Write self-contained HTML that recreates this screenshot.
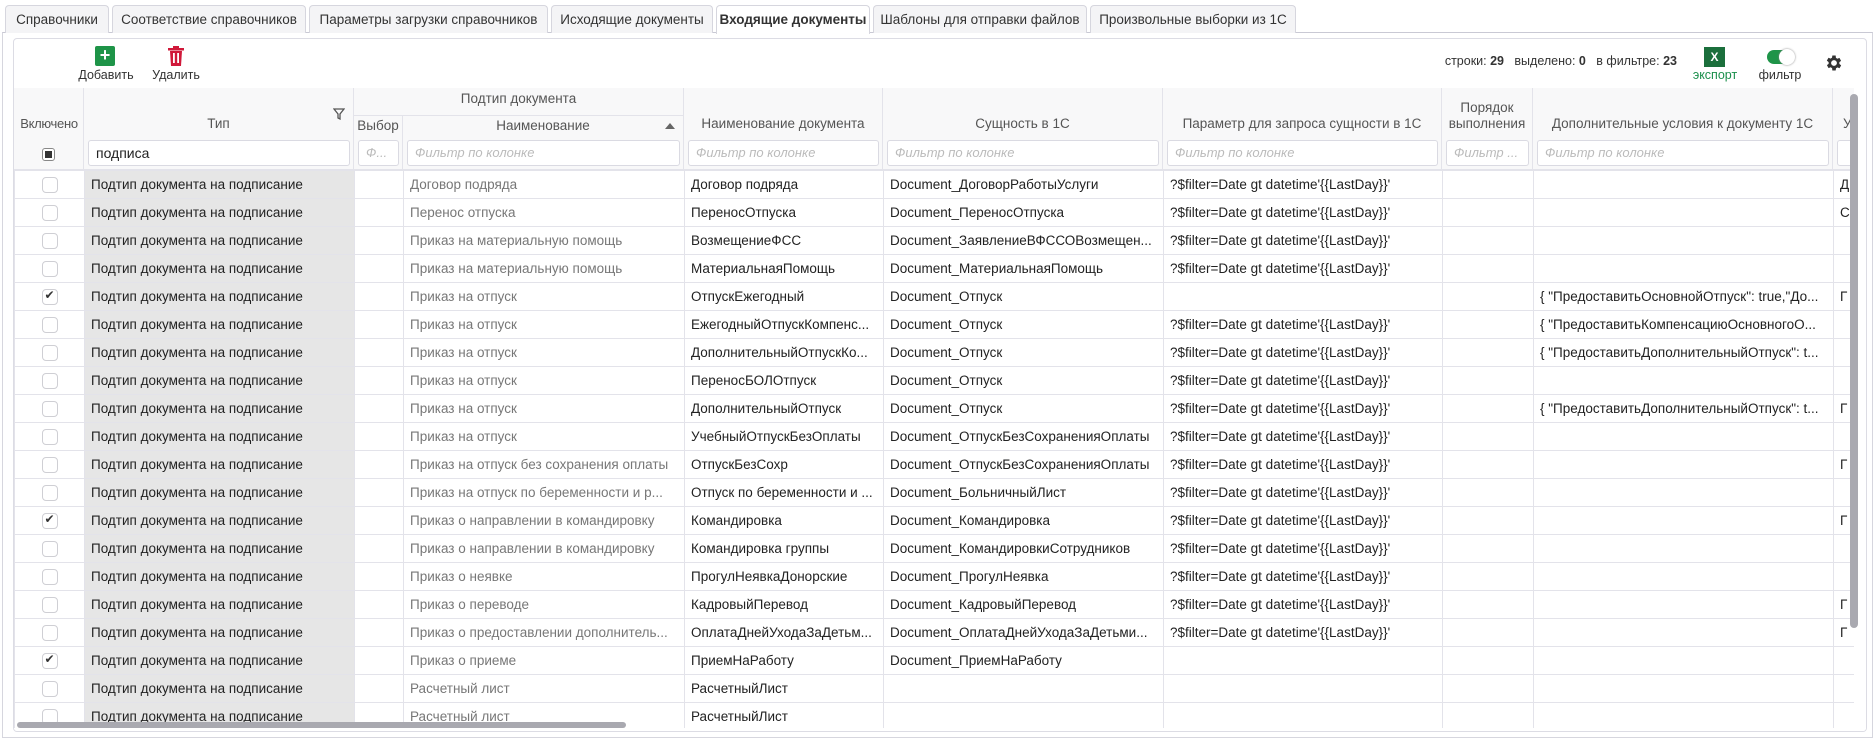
<!DOCTYPE html>
<html><head><meta charset="utf-8">
<style>
*{box-sizing:border-box;margin:0;padding:0}
body{width:1874px;height:740px;overflow:hidden;background:#fff;font-family:"Liberation Sans","DejaVu Sans",sans-serif;font-size:14px;color:#222;position:relative}
.tab{position:absolute;top:5px;height:28px;border:1px solid #d6d6de;border-bottom:none;border-radius:4px 4px 0 0;background:#f4f4f6;font-size:13.5px;color:#333;text-align:center;line-height:27px}
.tab.act{background:#fff;font-weight:bold;height:29px;z-index:2}
.outer{position:absolute;left:2px;top:32px;width:1871px;height:706px;border:1px solid #d6d6de;border-top:1px solid #c9c9d4;background:#fff}
.panel{position:absolute;left:13px;top:38px;width:1854px;height:694px;border:1px solid #dcdce4;border-radius:4px;background:#fff;overflow:hidden}
.lbl{position:absolute;font-size:12.5px;color:#333;text-align:center}
.grid{position:absolute;left:0;top:50px;border-collapse:collapse;table-layout:fixed}
.grid td{height:28px;border:1px solid #e3e3ea;padding:0 6px;white-space:nowrap;overflow:hidden;font-size:13.5px}
.grid td.t{background:#e6e6e6}
.grid td.g{color:#777}
.hd{position:absolute;background:#f8f8f9;border-right:1px solid #e3e3ea;border-bottom:1px solid #e3e3ea;color:#555;font-size:13.5px;text-align:center}
.fi{position:absolute;height:26px;border:1px solid #dadae2;border-radius:3px;background:#fff;font-style:italic;color:#bbb;font-size:13px;line-height:24px;padding-left:7px;white-space:nowrap;overflow:hidden}
.cb{display:inline-block;width:16px;height:16px;border:1px solid #cfcfd4;border-radius:4px;background:#fff;vertical-align:middle;position:relative}
.cb.on::after{content:"✔";position:absolute;left:2px;top:-2px;font-size:12px;color:#333}
</style></head><body>
<div class="outer"></div>
<div class="tab" style="left:5px;width:104px">Справочники</div>
<div class="tab" style="left:112px;width:194px">Соответствие справочников</div>
<div class="tab" style="left:309px;width:239px">Параметры загрузки справочников</div>
<div class="tab" style="left:551px;width:162px">Исходящие документы</div>
<div class="tab act" style="left:716px;width:154px">Входящие документы</div>
<div class="tab" style="left:873px;width:214px">Шаблоны для отправки файлов</div>
<div class="tab" style="left:1090px;width:206px">Произвольные выборки из 1С</div>

<div class="panel">
 <div style="position:absolute;left:81px;top:7px;width:20px;height:20px;background:#1e9448;border-radius:2px;color:#fff;text-align:center;line-height:19px;font-size:18px;font-weight:bold">+</div>
 <div class="lbl" style="left:62px;top:29px;width:60px">Добавить</div>
 <svg style="position:absolute;left:154px;top:7px" width="16" height="20" viewBox="0 0 16 20"><rect x="0" y="2" width="16" height="2.5" fill="#d0193a"/><rect x="5" y="0" width="6" height="3" fill="#d0193a"/><path d="M2 5h12l-1 15H3z" fill="#d0193a"/><rect x="5" y="7" width="1.8" height="10" fill="#fff"/><rect x="9.2" y="7" width="1.8" height="10" fill="#fff"/></svg>
 <div class="lbl" style="left:132px;top:29px;width:60px">Удалить</div>
 <div style="position:absolute;left:1380px;top:15px;width:283px;text-align:right;font-size:12.5px;color:#333">строки: <b>29</b> &nbsp; выделено: <b>0</b> &nbsp; в фильтре: <b>23</b></div>
 <div style="position:absolute;left:1690px;top:8px;width:21px;height:20px;background:#1b6f3c;color:#fff;font-weight:bold;font-size:12px;text-align:center;line-height:20px">X</div>
 <div class="lbl" style="left:1675px;top:29px;width:52px;color:#1b8f4c">экспорт</div>
 <div style="position:absolute;left:1753px;top:11px;width:26px;height:14px;border-radius:7px;background:#1e9448"></div>
 <div style="position:absolute;left:1765px;top:10px;width:16px;height:16px;border-radius:8px;background:#fff;box-shadow:0 0 2px #888"></div>
 <div class="lbl" style="left:1740px;top:29px;width:52px">фильтр</div>
 <svg style="position:absolute;left:1810px;top:14px" width="20" height="20" viewBox="0 0 24 24"><path fill="#333" d="M19.4 13a7.5 7.5 0 0 0 0-2l2.1-1.6-2-3.5-2.5 1a7.3 7.3 0 0 0-1.7-1L15 3h-4l-.4 2.7a7.3 7.3 0 0 0-1.7 1l-2.5-1-2 3.5L6.6 11a7.5 7.5 0 0 0 0 2l-2.1 1.6 2 3.5 2.5-1a7.3 7.3 0 0 0 1.7 1L11 21h4l.4-2.7a7.3 7.3 0 0 0 1.7-1l2.5 1 2-3.5zM13 15.5a3.5 3.5 0 1 1 0-7 3.5 3.5 0 0 1 0 7z" transform="translate(-1 0)"/></svg>

 <div class="hd" style="left:0;top:49px;width:70px;height:82px;overflow:visible"><div style="position:absolute;top:28px;left:0;width:70px;font-size:13px;letter-spacing:-0.3px;white-space:nowrap">Включено</div><div style="position:absolute;top:60px;left:28px;width:13px;height:13px;border:1px solid #888;border-radius:3px;background:#fff"><div style="margin:2px;width:7px;height:7px;background:#333"></div></div></div>
 <div class="hd" style="left:70px;top:49px;width:270px;height:82px"><div style="position:absolute;top:28px;width:100%">Тип</div><svg style="position:absolute;right:8px;top:20px" width="12" height="12" viewBox="0 0 12 12"><path d="M1 1h10L7 6v5L5 10V6z" fill="none" stroke="#555" stroke-width="1.3"/></svg></div>
 <div class="hd" style="left:340px;top:49px;width:330px;height:28px;line-height:22px">Подтип документа</div>
 <div class="hd" style="left:340px;top:77px;width:49px;height:54px"><div style="position:absolute;top:2px;width:100%">Выбор</div></div>
 <div class="hd" style="left:389px;top:77px;width:281px;height:54px"><div style="position:absolute;top:2px;width:100%">Наименование</div><div style="position:absolute;right:8px;top:7px;width:0;height:0;border-left:5px solid transparent;border-right:5px solid transparent;border-bottom:6px solid #666"></div></div>
 <div class="hd" style="left:670px;top:49px;width:199px;height:82px"><div style="position:absolute;top:28px;width:100%">Наименование документа</div></div>
 <div class="hd" style="left:869px;top:49px;width:280px;height:82px"><div style="position:absolute;top:28px;width:100%">Сущность в 1С</div></div>
 <div class="hd" style="left:1149px;top:49px;width:279px;height:82px"><div style="position:absolute;top:28px;width:100%">Параметр для запроса сущности в 1С</div></div>
 <div class="hd" style="left:1428px;top:49px;width:91px;height:82px"><div style="position:absolute;top:12px;width:100%;line-height:16px">Порядок<br>выполнения</div></div>
 <div class="hd" style="left:1519px;top:49px;width:300px;height:82px"><div style="position:absolute;top:28px;width:100%">Дополнительные условия к документу 1С</div></div>
 <div class="hd" style="left:1819px;top:49px;width:40px;height:82px"><div style="position:absolute;top:28px;left:10px">У</div></div>
 <div class="fi" style="left:74px;top:101px;width:262px;color:#222;font-style:normal;font-size:14px">подписа</div>
 <div class="fi" style="left:344px;top:101px;width:41px">Ф...</div>
 <div class="fi" style="left:393px;top:101px;width:273px">Фильтр по колонке</div>
 <div class="fi" style="left:674px;top:101px;width:191px">Фильтр по колонке</div>
 <div class="fi" style="left:873px;top:101px;width:272px">Фильтр по колонке</div>
 <div class="fi" style="left:1153px;top:101px;width:271px">Фильтр по колонке</div>
 <div class="fi" style="left:1432px;top:101px;width:83px">Фильтр ...</div>
 <div class="fi" style="left:1523px;top:101px;width:292px">Фильтр по колонке</div>
 <div class="fi" style="left:1823px;top:101px;width:40px"></div>

 <table class="grid" style="top:131px;width:1862px">
 <colgroup><col style="width:70px"><col style="width:270px"><col style="width:49px"><col style="width:281px"><col style="width:199px"><col style="width:280px"><col style="width:279px"><col style="width:91px"><col style="width:300px"><col style="width:43px"></colgroup>
 <tbody>
 <tr><td align="center"><span class="cb"></span></td><td class="t">Подтип документа на подписание</td><td></td><td class="g">Договор подряда</td><td>Договор подряда</td><td>Document_ДоговорРаботыУслуги</td><td>?$filter=Date gt datetime'{{LastDay}}'</td><td></td><td></td><td>Д</td></tr>
 <tr><td align="center"><span class="cb"></span></td><td class="t">Подтип документа на подписание</td><td></td><td class="g">Перенос отпуска</td><td>ПереносОтпуска</td><td>Document_ПереносОтпуска</td><td>?$filter=Date gt datetime'{{LastDay}}'</td><td></td><td></td><td>С</td></tr>
 <tr><td align="center"><span class="cb"></span></td><td class="t">Подтип документа на подписание</td><td></td><td class="g">Приказ на материальную помощь</td><td>ВозмещениеФСС</td><td>Document_ЗаявлениеВФССОВозмещен...</td><td>?$filter=Date gt datetime'{{LastDay}}'</td><td></td><td></td><td></td></tr>
 <tr><td align="center"><span class="cb"></span></td><td class="t">Подтип документа на подписание</td><td></td><td class="g">Приказ на материальную помощь</td><td>МатериальнаяПомощь</td><td>Document_МатериальнаяПомощь</td><td>?$filter=Date gt datetime'{{LastDay}}'</td><td></td><td></td><td></td></tr>
 <tr><td align="center"><span class="cb on"></span></td><td class="t">Подтип документа на подписание</td><td></td><td class="g">Приказ на отпуск</td><td>ОтпускЕжегодный</td><td>Document_Отпуск</td><td></td><td></td><td>{ "ПредоставитьОсновнойОтпуск": true,"До...</td><td>Г</td></tr>
 <tr><td align="center"><span class="cb"></span></td><td class="t">Подтип документа на подписание</td><td></td><td class="g">Приказ на отпуск</td><td>ЕжегодныйОтпускКомпенс...</td><td>Document_Отпуск</td><td>?$filter=Date gt datetime'{{LastDay}}'</td><td></td><td>{ "ПредоставитьКомпенсациюОсновногоО...</td><td></td></tr>
 <tr><td align="center"><span class="cb"></span></td><td class="t">Подтип документа на подписание</td><td></td><td class="g">Приказ на отпуск</td><td>ДополнительныйОтпускКо...</td><td>Document_Отпуск</td><td>?$filter=Date gt datetime'{{LastDay}}'</td><td></td><td>{ "ПредоставитьДополнительныйОтпуск": t...</td><td></td></tr>
 <tr><td align="center"><span class="cb"></span></td><td class="t">Подтип документа на подписание</td><td></td><td class="g">Приказ на отпуск</td><td>ПереносБОЛОтпуск</td><td>Document_Отпуск</td><td>?$filter=Date gt datetime'{{LastDay}}'</td><td></td><td></td><td></td></tr>
 <tr><td align="center"><span class="cb"></span></td><td class="t">Подтип документа на подписание</td><td></td><td class="g">Приказ на отпуск</td><td>ДополнительныйОтпуск</td><td>Document_Отпуск</td><td>?$filter=Date gt datetime'{{LastDay}}'</td><td></td><td>{ "ПредоставитьДополнительныйОтпуск": t...</td><td>Г</td></tr>
 <tr><td align="center"><span class="cb"></span></td><td class="t">Подтип документа на подписание</td><td></td><td class="g">Приказ на отпуск</td><td>УчебныйОтпускБезОплаты</td><td>Document_ОтпускБезСохраненияОплаты</td><td>?$filter=Date gt datetime'{{LastDay}}'</td><td></td><td></td><td></td></tr>
 <tr><td align="center"><span class="cb"></span></td><td class="t">Подтип документа на подписание</td><td></td><td class="g">Приказ на отпуск без сохранения оплаты</td><td>ОтпускБезСохр</td><td>Document_ОтпускБезСохраненияОплаты</td><td>?$filter=Date gt datetime'{{LastDay}}'</td><td></td><td></td><td>Г</td></tr>
 <tr><td align="center"><span class="cb"></span></td><td class="t">Подтип документа на подписание</td><td></td><td class="g">Приказ на отпуск по беременности и р...</td><td>Отпуск по беременности и ...</td><td>Document_БольничныйЛист</td><td>?$filter=Date gt datetime'{{LastDay}}'</td><td></td><td></td><td></td></tr>
 <tr><td align="center"><span class="cb on"></span></td><td class="t">Подтип документа на подписание</td><td></td><td class="g">Приказ о направлении в командировку</td><td>Командировка</td><td>Document_Командировка</td><td>?$filter=Date gt datetime'{{LastDay}}'</td><td></td><td></td><td>Г</td></tr>
 <tr><td align="center"><span class="cb"></span></td><td class="t">Подтип документа на подписание</td><td></td><td class="g">Приказ о направлении в командировку</td><td>Командировка группы</td><td>Document_КомандировкиСотрудников</td><td>?$filter=Date gt datetime'{{LastDay}}'</td><td></td><td></td><td></td></tr>
 <tr><td align="center"><span class="cb"></span></td><td class="t">Подтип документа на подписание</td><td></td><td class="g">Приказ о неявке</td><td>ПрогулНеявкаДонорские</td><td>Document_ПрогулНеявка</td><td>?$filter=Date gt datetime'{{LastDay}}'</td><td></td><td></td><td></td></tr>
 <tr><td align="center"><span class="cb"></span></td><td class="t">Подтип документа на подписание</td><td></td><td class="g">Приказ о переводе</td><td>КадровыйПеревод</td><td>Document_КадровыйПеревод</td><td>?$filter=Date gt datetime'{{LastDay}}'</td><td></td><td></td><td>Г</td></tr>
 <tr><td align="center"><span class="cb"></span></td><td class="t">Подтип документа на подписание</td><td></td><td class="g">Приказ о предоставлении дополнитель...</td><td>ОплатаДнейУходаЗаДетьм...</td><td>Document_ОплатаДнейУходаЗаДетьми...</td><td>?$filter=Date gt datetime'{{LastDay}}'</td><td></td><td></td><td>Г</td></tr>
 <tr><td align="center"><span class="cb on"></span></td><td class="t">Подтип документа на подписание</td><td></td><td class="g">Приказ о приеме</td><td>ПриемНаРаботу</td><td>Document_ПриемНаРаботу</td><td></td><td></td><td></td><td></td></tr>
 <tr><td align="center"><span class="cb"></span></td><td class="t">Подтип документа на подписание</td><td></td><td class="g">Расчетный лист</td><td>РасчетныйЛист</td><td></td><td></td><td></td><td></td><td></td></tr>
 <tr><td align="center"><span class="cb"></span></td><td class="t">Подтип документа на подписание</td><td></td><td class="g">Расчетный лист</td><td>РасчетныйЛист</td><td></td><td></td><td></td><td></td><td></td></tr>
 </tbody></table>
 <div style="position:absolute;left:0;top:689px;width:1854px;height:6px;background:#fff"></div>
 <div style="position:absolute;left:3px;top:683px;width:609px;height:6px;border-radius:3px;background:#a9a9b0"></div>
 <div style="position:absolute;left:1840px;top:49px;width:14px;height:645px;background:#fff"></div>
 <div style="position:absolute;left:1836px;top:55px;width:8px;height:534px;border-radius:4px;background:#a9a9b0"></div>
</div>
</body></html>
